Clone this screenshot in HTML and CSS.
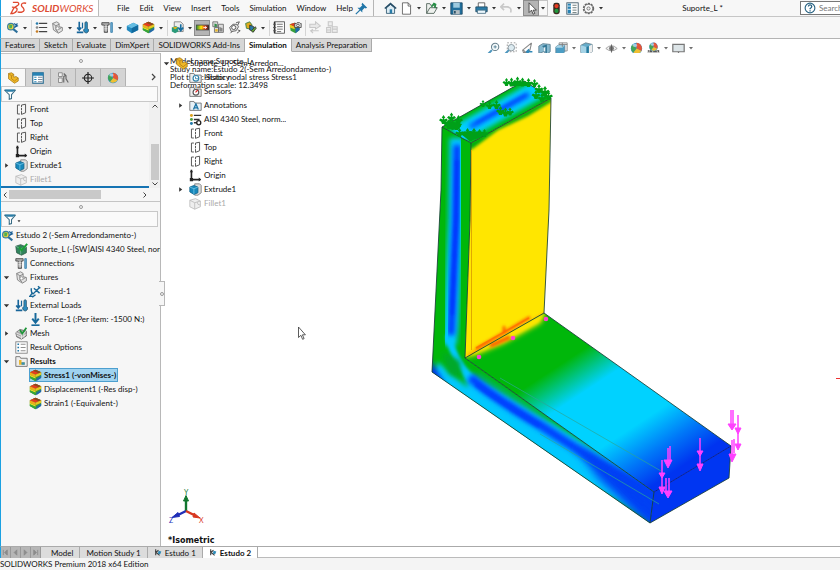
FILE: index.html
```html
<!DOCTYPE html>
<html lang="en">
<head>
<meta charset="utf-8">
<title>SOLIDWORKS - Suporte_L</title>
<link rel="stylesheet" href="styles.css">
</head>
<body>
<svg class="sprite" aria-hidden="true">
  <symbol id="down" viewBox="0 0 8 8"><path d="M2 3h4L4 5.500z" fill="#333"/></symbol>
  <symbol id="right" viewBox="0 0 8 8"><path d="M2.500 1.500v5L6 4z" fill="#333"/></symbol>
  <symbol id="open-arrow" viewBox="0 0 8 8"><path d="M1 2.500h6L4 6z" fill="#333"/></symbol>
  <symbol id="study" viewBox="0 0 16 16"><circle cx="6" cy="7" r="4" fill="#f4d13c" stroke="#3a7fa0" stroke-width="1.500"/><path d="M4 4l4 1-1 4-3 0z" fill="#4caf50"/><path d="M9 10l5 4" stroke="#2d6f9a" stroke-width="2.500"/><path d="M10 3l4 3-4 2M14 3l-3 5" stroke="#1a5f96" stroke-width="1.500" fill="none"/></symbol>
  <symbol id="list" viewBox="0 0 16 16"><path d="M5 3h10M5 8h10M5 13h10" stroke="#444" stroke-width="1.500"/><circle cx="2.500" cy="3" r="1.600" fill="#287cad"/><circle cx="2.500" cy="8" r="1.600" fill="#888"/><circle cx="2.500" cy="13" r="1.600" fill="#c57b23"/></symbol>
  <symbol id="fixture" viewBox="0 0 16 16"><path d="M2 3l5-2 3 2v4l4 1v4l-5 3-6-4z" fill="#e4e4e4" stroke="#777"/><path d="M2 3l4 3v5l3 3M6 6l4-2M10 10l3-2" stroke="#777" fill="none"/><circle cx="8" cy="9" r="2" fill="#fff" stroke="#888"/></symbol>
  <symbol id="loads" viewBox="0 0 16 16"><path d="M4 1v9M1.500 8L4 11l2.500-3M1 14h8" stroke="#17659a" stroke-width="2" fill="none"/><path d="M8 2v7" stroke="#17659a" stroke-width="1.500"/><path d="M11 2.500a1.500 1.500 0 0 1 3 0V9a3 3 0 1 1-3 0z" fill="#2b8cc0" stroke="#315c74"/></symbol>
  <symbol id="bolt" viewBox="0 0 16 16"><path d="M1 2h9v3H8v9H4V5H1z" fill="#aaa" stroke="#444"/><path d="M4 7h4M4 9h4M4 11h4" stroke="#eee"/><path d="M12 2h2v12h-2z" fill="#72b3d9" stroke="#367ca7"/></symbol>
  <symbol id="cube" viewBox="0 0 16 16"><path d="M1 6l8-4 6 3v6l-8 4-6-4z" fill="#2389bf"/><path d="M1 6l8-4 6 3-8 4z" fill="#65bde2"/><path d="M7 9l8-4v6l-8 4z" fill="#126b9f"/></symbol>
  <symbol id="result" viewBox="0 0 16 16"><path d="M1 4l7-3 7 3v6l-7 5-7-4z" fill="#3d9a35"/><path d="M1 4l7-3 7 3-7 3z" fill="#e43b20"/><path d="M5 2.300L8 1l7 3-3 1.300z" fill="#8a4a1c"/><path d="M1 4l7 3v3L1 7z" fill="#f5a81b"/><path d="M1 7l7 3v2L1 9z" fill="#e8e023"/><path d="M1 9l7 3v3l-7-4z" fill="#37a63a"/><path d="M8 7l7-3v3l-7 3z" fill="#e8c71f"/><path d="M9 12l6-4v3l-6 4z" fill="#2169a8"/></symbol>
  <symbol id="plot" viewBox="0 0 16 16"><path d="M4 1h8l3 3v9H4z" fill="#eee" stroke="#777"/><path d="M1 8l5-2 3 2v5l-4 2-4-2z" fill="#2b9a79"/><path d="M2 8l4-1 2 1-3 2z" fill="#e0b31e"/><path d="M12 4v7M9 8l3 4 3-4" stroke="#176d9f" stroke-width="2" fill="none"/></symbol>
  <linearGradient id="rainbow"><stop stop-color="#267f3b"/><stop offset=".4" stop-color="#ffe900"/><stop offset=".7" stop-color="#eb3a21"/><stop offset="1" stop-color="#222"/></linearGradient>
  <symbol id="band" viewBox="0 0 16 16"><path d="M0 5h16v6H0z" fill="url(#rainbow)" stroke="#444"/><path d="M9 8h4M11 6.500L13 8l-2 1.500" stroke="#fff" fill="none"/></symbol>
  <symbol id="compare" viewBox="0 0 16 16"><path d="M1 1h6v6H1zM8 4h6v10H8zM3 8h5v6H3z" fill="#ddd" stroke="#666"/><path d="M3 3l3 1v3H3z" fill="#35904b"/><path d="M9 7l4 2v4H9z" fill="#888"/><path d="M4 10h3v3H4z" fill="#e9b622"/></symbol>
  <symbol id="probe" viewBox="0 0 16 16"><path d="M2 8l4-4h5l2 3-3 5-6 1z" fill="#ddd" stroke="#555"/><circle cx="7" cy="8" r="2.500" fill="#fff" stroke="#444"/><path d="M10 2l4-1-2 4M5 13l-2 2M12 11l3 1-4 3" stroke="#444" fill="none"/></symbol>
  <symbol id="report" viewBox="0 0 16 16"><rect x="2" y="1" width="12" height="14" fill="#fff" stroke="#444"/><path d="M2 1v14" stroke="#333" stroke-width="2"/><path d="M5 4h7M5 7h7M5 10h7M5 13h5M0 4h4M0 8h4M0 12h4" stroke="#555"/></symbol>
  <symbol id="image" viewBox="0 0 16 16"><path d="M1 4l6-2 6 2v7l-5 4-6-3z" fill="#38a03a"/><path d="M1 4l6 3v3L1 8z" fill="#f0c722"/><path d="M1 4l6-2 4 2-4 3z" fill="#e43b20"/><path d="M8 9l5-2v4l-5 4z" fill="#2169a8"/><path d="M7 3h2l1-1h3l1 1h1v5H7z" fill="#ddd" stroke="#444"/><circle cx="11" cy="5.500" r="1.600" fill="#fff" stroke="#444"/></symbol>
  <symbol id="tools" viewBox="0 0 16 16"><path d="M2 3l5-2 3 4-2 5-5-1z" fill="#e0ab1d" stroke="#297b46"/><path d="M7 5l5 2v6l-5-2z" fill="#287da9" stroke="#333"/><path d="M9 12l5-5 1 2-4 5z" fill="#65a833" stroke="#333"/></symbol>
  <symbol id="ghost" viewBox="0 0 16 16"><path d="M1 4h7V1l6 5-6 4V8H1zM3 12h9M5 10l-3 2 3 3" stroke="#c8c8c8" fill="#e8e8e8" stroke-width="1.300"/></symbol>
  <symbol id="ghost2" viewBox="0 0 16 16"><path d="M4 1h5v5H4zM2 8h5v6H2zM9 7h6v7H9zM9 10h6M2 11h5" stroke="#c8c8c8" fill="#eee" stroke-width="1.300"/></symbol>
  <symbol id="home" viewBox="0 0 16 16"><path d="M3 7v7h10V7L8 3z" fill="#dcebf3" stroke="#28516a"/><path d="M1 8l7-6 7 6" fill="none" stroke="#244c66" stroke-width="2"/><path d="M7 9h3v5H7z" fill="#287ca8"/></symbol>
  <symbol id="page" viewBox="0 0 16 16"><path d="M3 1h7l3 3v11H3z" fill="#fff" stroke="#555"/><path d="M10 1v4h3" fill="none" stroke="#555"/></symbol>
  <symbol id="open" viewBox="0 0 16 16"><path d="M2 2h4l1 2h5v3h3l-4 7H2z" fill="#eef1ee" stroke="#44584d"/><path d="M2 14l4-7h9" fill="none" stroke="#44584d"/><path d="M8 6l3-4 2 1-1 4" stroke="#258f45" stroke-width="2" fill="none"/></symbol>
  <symbol id="save" viewBox="0 0 16 16"><path d="M1 1h14v14H1z" fill="#216f9d" stroke="#174461"/><path d="M4 1h8v6H4z" fill="#9dc9df"/><path d="M4 10h8v5H4z" fill="#b4bdc2"/><path d="M5 11h2v3H5z" fill="#234b62"/></symbol>
  <symbol id="print" viewBox="0 0 16 16"><path d="M4 1h8v6H4z" fill="#fff" stroke="#4c4c4c"/><path d="M1 6h14v6H1z" fill="#287aa6" stroke="#244c63"/><path d="M3 10h10v4H3z" fill="#eaf6fc" stroke="#466c82"/></symbol>
  <symbol id="undo" viewBox="0 0 16 16"><path d="M5 2L1 6l4 4M2 6h7q6 1 4 7" fill="none" stroke="#c9c9c9" stroke-width="2"/></symbol>
  <symbol id="pointer" viewBox="0 0 16 16"><path d="M5 1v12l3-3 2 5 2-1-2-4h4z" fill="#fff" stroke="#333"/></symbol>
  <symbol id="light" viewBox="0 0 16 16"><rect x="4" y="1" width="8" height="14" rx="3" fill="#3b2a20"/><circle cx="8" cy="5" r="2.600" fill="#e83b22"/><circle cx="8" cy="11" r="2.600" fill="#21983d"/></symbol>
  <symbol id="props" viewBox="0 0 16 16"><rect x="1" y="1" width="14" height="14" fill="#fff" stroke="#344e5d"/><path d="M2 2h4v12H2z" fill="#2682b4"/><path d="M8 4h5M8 7h5M8 10h5M8 13h5" stroke="#566"/><path d="M2 5h4M2 9h4" stroke="#fff"/></symbol>
  <symbol id="table" viewBox="0 0 16 16"><rect x="1" y="1" width="14" height="14" fill="#fff" stroke="#2a6d92" stroke-width="1.500"/><path d="M1 1h14v4H1z" fill="#2682b4"/><path d="M3 7h3M3 10h3M3 13h3" stroke="#2682b4" stroke-width="1.500"/><path d="M8 7h6M8 10h6M8 13h6" stroke="#789" stroke-width="1.300"/></symbol>
  <symbol id="gear" viewBox="0 0 16 16"><circle cx="8" cy="8" r="6" fill="none" stroke="#666" stroke-width="2" stroke-dasharray="2.700 1.100"/><circle cx="8" cy="8" r="5" fill="#fff" stroke="#666"/><circle cx="8" cy="8" r="2" fill="#eee" stroke="#666"/></symbol>
  <symbol id="pin" viewBox="0 0 16 16"><path d="M9 1l6 6-2 1-1-1-3 3v3L3 7h3l3-3-1-1z" fill="#2176a8"/><path d="M6 10l-5 5" stroke="#2176a8" stroke-width="1.500"/></symbol>
  <symbol id="help" viewBox="0 0 16 16"><circle cx="8" cy="8" r="6.500" fill="#fff" stroke="#286282" stroke-width="1.500"/><path d="M5.800 6q.2-2.200 2.300-2.200T10.400 6q0 1.200-2.200 2.600v1.200M8.100 11v1.700" stroke="#286282" stroke-width="1.700" fill="none"/></symbol>
  <symbol id="fit" viewBox="0 0 16 16"><circle cx="10" cy="6" r="4.500" fill="#f4fafc" stroke="#68818e" stroke-width="1.300"/><path d="M8 6h4M10 4v4" stroke="#4b788e"/><path d="M6 10l-5 5" stroke="#4d96bd" stroke-width="2.500"/></symbol>
  <symbol id="zoombox" viewBox="0 0 16 16"><rect x="4" y="1" width="11" height="11" fill="none" stroke="#888" stroke-dasharray="2 2"/><circle cx="9" cy="7" r="4" fill="#dceaf0" stroke="#7a8991"/><path d="M6 10l-5 5" stroke="#4d96bd" stroke-width="2.500"/></symbol>
  <symbol id="prev" viewBox="0 0 16 16"><path d="M13 1L2 10l1 3h5M13 1l-2 9-5 3-3-3" fill="#e9eef0" stroke="#888" stroke-width="1.300"/><path d="M14 12H8M10 9l-3 3 3 3" stroke="#3189b7" stroke-width="2" fill="none"/></symbol>
  <symbol id="section" viewBox="0 0 16 16"><path d="M1 5l5-3 9 1v9l-4 3-4-3-6 2z" fill="#87bad0" stroke="#577b8c"/><path d="M5 5l6-2v11l-4-3V7z" fill="#337795"/><path d="M7 7l2-1v6l-2-1z" fill="#e9f2f6"/></symbol>
  <symbol id="views" viewBox="0 0 16 16"><path d="M5 1h10v10H5z" fill="#eee" stroke="#888"/><path d="M1 6l3-2h8v8l-3 3H1z" fill="#4c9dc4" stroke="#5c879c"/><path d="M1 6l3-2h8L9 7H1z" fill="#a9d5e8"/><path d="M9 1v5M5 3h10" stroke="#777"/></symbol>
  <symbol id="style" viewBox="0 0 16 16"><path d="M1 4l6-3 8 2v9l-7 3-7-2z" fill="#65abc9" stroke="#687f8a"/><path d="M1 4l7 2v9l-7-2z" fill="#a5d3e6"/><path d="M8 6l3-1v9l-3 1z" fill="#247a9f"/><path d="M11 5l4-2v9l-4 2z" fill="#eee"/></symbol>
  <symbol id="eye" viewBox="0 0 16 16"><path d="M1 8q7-7 14 0-7 6-14 0z" fill="#eee" stroke="#999"/><circle cx="8" cy="8" r="3" fill="#777"/><path d="M8 3v10" stroke="#555"/></symbol>
  <symbol id="ball" viewBox="0 0 16 16"><circle cx="8" cy="8" r="7" fill="#4099cf"/><path d="M8 8V1a7 7 0 0 1 6 10z" fill="#e55639"/><path d="M8 8l6 3a7 7 0 0 1-10 2z" fill="#f0bf31"/><path d="M8 8l-4 5A7 7 0 0 1 3 3z" fill="#43a457"/><ellipse cx="6" cy="4" rx="3" ry="2" fill="#fff" opacity=".5"/></symbol>
  <symbol id="scene" viewBox="0 0 16 16"><path d="M1 10h14v5H1z" fill="#555"/><path d="M3 10l-1 5M7 10v5M12 10l2 5M1 13h14" stroke="#ddd"/><use href="#ball" x="2" width="12" height="12"/></symbol>
  <symbol id="monitor" viewBox="0 0 16 16"><path d="M1 3h14v9H1z" fill="#dde5e8" stroke="#777" stroke-width="1.500"/><path d="M8 12v3M4 15h8" stroke="#777" stroke-width="1.500"/></symbol>
  <symbol id="part" viewBox="0 0 16 16"><path d="M2 2l4-1 3 2v4l3-1 3 2v4l-5 3-8-6z" fill="#f0b827" stroke="#a77b1c"/><path d="M2 2l4 3v4l4 3M6 5l3-2M10 12l5-4" stroke="#b27e16" fill="none"/></symbol>
  <symbol id="config" viewBox="0 0 16 16"><path d="M2 1h5v5H2zM2 8h5v6H2z" fill="#eee" stroke="#777"/><path d="M9 2l3 3v4l3 5M9 14V6l3-2" stroke="#666" stroke-width="1.500" fill="none"/></symbol>
  <symbol id="target" viewBox="0 0 16 16"><circle cx="8" cy="8" r="5" fill="none" stroke="#222" stroke-width="1.400"/><path d="M8 0v16M0 8h16" stroke="#222" stroke-width="1.600"/></symbol>
  <symbol id="funnel" viewBox="0 0 16 16"><path d="M1 3h14L10 9v5l-3 1V9z" fill="#fff" stroke="#386c85" stroke-width="1.400"/><path d="M1 2h14l-3 3H4z" fill="#2b7ea8"/></symbol>
  <symbol id="plane" viewBox="0 0 16 16"><path d="M6 2.500H3v11h3M8 2.500l5-1v10.500l-5 2V10M8 2.500V5" fill="none" stroke="#555" stroke-width="1.200"/><path d="M8 6v3" stroke="#555" stroke-width="1.200"/></symbol>
  <symbol id="origin" viewBox="0 0 16 16"><path d="M3 1v12h11" fill="none" stroke="#222" stroke-width="2"/><path d="M1 4l2-3 2 3M12 10.500l3 2.500-3 2.500M1 11h4v4H1z" fill="#222"/></symbol>
  <symbol id="extrude" viewBox="0 0 16 16"><path d="M7 1h6l2 2v9l-4 3H7z" fill="#ddd" stroke="#777"/><path d="M1 5l5-2 5 2v7l-5 2-5-3z" fill="#1688bc" stroke="#17658b"/><path d="M1 5l5 2 5-2M6 7v7" stroke="#74c5e5" fill="none"/></symbol>
  <symbol id="fillet" viewBox="0 0 16 16"><path d="M1 4l7-2 6 3v7l-7 3-6-3z" fill="#eee" stroke="#bbb"/><path d="M1 4l6 3v8M7 7l7-2M10 6q0 4 4 4" fill="none" stroke="#bbb"/></symbol>
  <symbol id="folder-h" viewBox="0 0 16 16"><path d="M1 3h5l1 2h8v9H1z" fill="#eee" stroke="#666"/><circle cx="8.500" cy="9" r="3.500" fill="#fff" stroke="#2a7faa" stroke-width="1.400"/><path d="M8 7v2.500h3" stroke="#2a7faa" fill="none"/></symbol>
  <symbol id="folder-s" viewBox="0 0 16 16"><path d="M1 3h5l1 2h8v9H1z" fill="#eee" stroke="#666"/><circle cx="8.500" cy="9" r="3.500" fill="#fff" stroke="#555" stroke-width="1.400"/><path d="M8 9l3-3" stroke="#d22" stroke-width="1.500"/></symbol>
  <symbol id="folder-a" viewBox="0 0 16 16"><path d="M1 3h5l1 2h8v9H1z" fill="#e6f1f7" stroke="#666"/><path d="M5.500 13L8.500 6l3 7M6.500 11h4" stroke="#1a72a4" stroke-width="1.600" fill="none"/></symbol>
  <symbol id="material" viewBox="0 0 16 16"><path d="M6 3h9M6 8h7M6 12h4" stroke="#333" stroke-width="1.600"/><circle cx="3" cy="3" r="1.800" fill="#dda11b"/><circle cx="3" cy="8" r="1.800" fill="#4f9b40"/><circle cx="3" cy="13" r="1.800" fill="#2279a9"/><circle cx="12" cy="12" r="2.500" fill="#fff" stroke="#222" stroke-width="1.600"/></symbol>
  <symbol id="solid" viewBox="0 0 16 16"><path d="M1 4l6-2 7 3v7l-6 3-6-3z" fill="#31845d" stroke="#315c4a"/><path d="M1 4l6 3v7M7 7l7-2" stroke="#7dc09c" fill="none"/><path d="M5 5l3 4 7-8" fill="none" stroke="#18a134" stroke-width="2.400"/></symbol>
  <symbol id="fixed" viewBox="0 0 16 16"><path d="M3 4q-1 5 2 7l8-8M6 4l7 6M11 1.500l3 2.500M4 10l-3 4h4M8 12l-4 3" fill="none" stroke="#176797" stroke-width="1.700"/></symbol>
  <symbol id="force" viewBox="0 0 16 16"><path d="M8 0v10M4 7l4 5 4-5" fill="none" stroke="#17699b" stroke-width="2.400"/><path d="M3 15h10" stroke="#17699b" stroke-width="2"/></symbol>
  <symbol id="mesh" viewBox="0 0 16 16"><path d="M1 7l5-4 8 2v6l-6 4-6-3z" fill="#aaa" stroke="#666"/><path d="M1 7l7 3 6-5M8 10v5M4 5l7 2v6M2 10l6 3 6-4" stroke="#eee" fill="none"/><path d="M6 4l3 4 5-7" stroke="#20963a" stroke-width="2.200" fill="none"/></symbol>
  <symbol id="options" viewBox="0 0 16 16"><rect x="1" y="1" width="14" height="14" fill="#fff" stroke="#777"/><path d="M7 4h6M7 8h6M7 12h6" stroke="#777"/><path d="M3 4h2M3 8h2M3 12h2" stroke="#267baa" stroke-width="2"/></symbol>
  <symbol id="folder-r" viewBox="0 0 16 16"><path d="M1 2h5l1 2h8v10H1z" fill="#eee" stroke="#666"/><path d="M5 6v6h7V9H8V6z" fill="#eab52a"/><path d="M8 9h4v3H8z" fill="#3191bb"/></symbol>
  <symbol id="studytab" viewBox="0 0 16 16"><path d="M3 2v11M3 8l5-4M4 8l6 5" stroke="#444" stroke-width="2"/><path d="M8 5l5 1-2 5-4-1z" fill="#2b8bb8"/></symbol>
  <symbol id="tee" viewBox="0 0 12 12"><path d="M6 0L8.500 3.500 7 4v2l3-1.500L12 7 9 9 8 12H4L3 9 0 7l2-2.500L5 6V4L3.500 3.500z"/></symbol>
</svg>

<div class="app">
  <header class="titlebar">
    <div class="logo">
      <svg viewBox="0 0 20 14"><path d="M3 1h5q3 2-1 4L4 7M2 6q7 0 5 4-2 3-6 3l3-6M17 2q-5-1-5 2 0 1 2 3 2 3-1 4-2 1-5 0" fill="none" stroke="#e0492f" stroke-width="1.400"/></svg>
      <span class="brand"><b>SOLID</b>WORKS</span>
    </div>
    <nav class="menu"><button>File</button><button>Edit</button><button>View</button><button>Insert</button><button>Tools</button><button>Simulation</button><button>Window</button><button>Help</button></nav>
    <button class="ib pinbtn" aria-label="Pin menu"><svg><use href="#pin"/></svg></button>
    <div class="quick">
      <button class="ib" aria-label="Home"><svg><use href="#home"/></svg></button>
      <button class="ib" aria-label="New"><svg><use href="#page"/></svg></button><button class="dd" aria-label="New options"><svg><use href="#down"/></svg></button>
      <button class="ib" aria-label="Open"><svg><use href="#open"/></svg></button><button class="dd" aria-label="Open options"><svg><use href="#down"/></svg></button>
      <button class="ib" aria-label="Save"><svg><use href="#save"/></svg></button><button class="dd" aria-label="Save options"><svg><use href="#down"/></svg></button>
      <button class="ib" aria-label="Print"><svg><use href="#print"/></svg></button><button class="dd" aria-label="Print options"><svg><use href="#down"/></svg></button>
      <button class="ib" aria-label="Undo"><svg><use href="#undo"/></svg></button><button class="dd" aria-label="Undo options"><svg><use href="#down"/></svg></button>
      <button class="ib pressed" aria-label="Select"><svg><use href="#pointer"/></svg></button><button class="dd framed" aria-label="Select options"><svg><use href="#down"/></svg></button>
      <button class="ib" aria-label="Rebuild"><svg><use href="#light"/></svg></button>
      <button class="ib" aria-label="File properties"><svg><use href="#props"/></svg></button>
      <button class="ib" aria-label="Options"><svg><use href="#gear"/></svg></button><button class="dd" aria-label="Options menu"><svg><use href="#down"/></svg></button>
    </div>
    <div class="doc">Suporte_L *</div>
    <label class="search"><svg><use href="#help"/></svg><input type="text" placeholder="Search" aria-label="Search"></label>
  </header>

  <div class="toolbar">
    <button class="ib" aria-label="Study advisor"><svg><use href="#study"/></svg></button><button class="dd" aria-label="Study options"><svg><use href="#down"/></svg></button><i class="sep"></i>
    <button class="ib" aria-label="Apply material"><svg><use href="#list"/></svg></button>
    <button class="ib" aria-label="Fixtures"><svg><use href="#fixture"/></svg></button><button class="dd" aria-label="Fixture options"><svg><use href="#down"/></svg></button>
    <button class="ib" aria-label="External loads"><svg><use href="#loads"/></svg></button><button class="dd" aria-label="Load options"><svg><use href="#down"/></svg></button>
    <button class="ib" aria-label="Connections"><svg><use href="#bolt"/></svg></button><button class="dd" aria-label="Connection options"><svg><use href="#down"/></svg></button>
    <button class="ib" aria-label="Shell manager"><svg><use href="#cube"/></svg></button>
    <button class="ib" aria-label="Run study"><svg><use href="#result"/></svg></button><button class="dd" aria-label="Run options"><svg><use href="#down"/></svg></button><i class="sep"></i>
    <button class="ib" aria-label="Results advisor"><svg><use href="#plot"/></svg></button><button class="dd" aria-label="Results options"><svg><use href="#down"/></svg></button>
    <button class="ib pressed" aria-label="Deformed result"><svg><use href="#band"/></svg></button>
    <button class="ib" aria-label="Compare results"><svg><use href="#compare"/></svg></button>
    <button class="ib" aria-label="Design insight"><svg><use href="#probe"/></svg></button>
    <button class="ib" aria-label="Plot tools"><svg><use href="#tools"/></svg></button><button class="dd" aria-label="Plot tool options"><svg><use href="#down"/></svg></button><i class="sep"></i>
    <button class="ib" aria-label="Report"><svg><use href="#report"/></svg></button>
    <button class="ib" aria-label="Include image"><svg><use href="#image"/></svg></button><i class="sep"></i>
    <button class="ib" aria-label="Offloaded simulation"><svg><use href="#ghost"/></svg></button>
    <button class="ib" aria-label="Manage network"><svg><use href="#ghost2"/></svg></button>
  </div>

  <div class="ribbon">
    <nav class="tabs"><button>Features</button><button>Sketch</button><button>Evaluate</button><button>DimXpert</button><button>SOLIDWORKS Add-Ins</button><button class="on">Simulation</button><button>Analysis Preparation</button></nav>
    <div class="hud">
      <button class="ib" aria-label="Zoom to fit"><svg><use href="#fit"/></svg></button>
      <button class="ib" aria-label="Zoom to area"><svg><use href="#zoombox"/></svg></button>
      <button class="ib" aria-label="Previous view"><svg><use href="#prev"/></svg></button>
      <button class="ib" aria-label="Section view"><svg><use href="#section"/></svg></button>
      <button class="ib" aria-label="View orientation"><svg><use href="#views"/></svg></button><button class="dd" aria-label="Orientation options"><svg><use href="#down"/></svg></button>
      <button class="ib" aria-label="Display style"><svg><use href="#style"/></svg></button><button class="dd" aria-label="Style options"><svg><use href="#down"/></svg></button>
      <button class="ib" aria-label="Hide or show"><svg><use href="#eye"/></svg></button><button class="dd" aria-label="Visibility options"><svg><use href="#down"/></svg></button>
      <button class="ib" aria-label="Edit appearance"><svg><use href="#ball"/></svg></button>
      <button class="ib" aria-label="Apply scene"><svg><use href="#scene"/></svg></button><button class="dd" aria-label="Scene options"><svg><use href="#down"/></svg></button>
      <button class="ib" aria-label="View settings"><svg><use href="#monitor"/></svg></button><button class="dd" aria-label="View options"><svg><use href="#down"/></svg></button>
    </div>
  </div>

  <main class="work">
    <aside class="panel">
      <div class="grip"><i></i></div>
      <div class="ptabs">
        <button class="on" aria-label="Feature tree"><svg><use href="#part"/></svg></button>
        <button aria-label="Properties"><svg><use href="#table"/></svg></button>
        <button aria-label="Configurations"><svg><use href="#config"/></svg></button>
        <button aria-label="DimXpert manager"><svg><use href="#target"/></svg></button>
        <button aria-label="Display manager"><svg><use href="#ball"/></svg></button>
        <button class="more" aria-label="More tabs"><svg viewBox="0 0 8 12"><path d="M2 3l3 3-3 3" fill="none" stroke="#444" stroke-width="1.200"/></svg></button>
      </div>
      <div class="filter"><svg><use href="#funnel"/></svg></div>
      <div class="upper">
        <div class="col">
          <ul class="tree">
            <li class="l1"><i></i><svg><use href="#plane"/></svg>Front</li>
            <li class="l1"><i></i><svg><use href="#plane"/></svg>Top</li>
            <li class="l1"><i></i><svg><use href="#plane"/></svg>Right</li>
            <li class="l1"><i></i><svg><use href="#origin"/></svg>Origin</li>
            <li class="l1"><i><svg><use href="#right"/></svg></i><svg><use href="#extrude"/></svg>Extrude1</li>
            <li class="l1 off"><i></i><svg><use href="#fillet"/></svg>Fillet1</li>
          </ul>
        </div>
        <div class="vscroll"><svg viewBox="0 0 8 8"><path d="M1.500 5.500L4 3l2.500 2.500" /></svg><b></b><svg viewBox="0 0 8 8"><path d="M1.500 2.500L4 5l2.500-2.500" /></svg></div>
      </div>
      <div class="hscroll"><svg viewBox="0 0 8 8"><path d="M5.500 1.500L3 4l2.500 2.500" /></svg><b></b><svg viewBox="0 0 8 8"><path d="M2.500 1.500L5 4 2.500 6.500" /></svg></div>
      <div class="grip low"><i></i></div>
      <div class="filter"><svg><use href="#funnel"/></svg><svg class="tiny"><use href="#down"/></svg></div>
      <ul class="tree study">
        <li class="l0"><svg><use href="#study"/></svg>Estudo 2 (-Sem Arredondamento-)</li>
        <li class="l1"><i></i><svg><use href="#solid"/></svg>Suporte_L (-[SW]AISI 4340 Steel, norm.</li>
        <li class="l1"><i></i><svg><use href="#bolt"/></svg>Connections</li>
        <li class="l1"><i><svg><use href="#open-arrow"/></svg></i><svg><use href="#fixture"/></svg>Fixtures</li>
        <li class="l2"><i></i><svg><use href="#fixed"/></svg>Fixed-1</li>
        <li class="l1"><i><svg><use href="#open-arrow"/></svg></i><svg><use href="#loads"/></svg>External Loads</li>
        <li class="l2"><i></i><svg><use href="#force"/></svg>Force-1 (:Per item: -1500 N:)</li>
        <li class="l1"><i><svg><use href="#right"/></svg></i><svg><use href="#mesh"/></svg>Mesh</li>
        <li class="l1"><i></i><svg><use href="#options"/></svg>Result Options</li>
        <li class="l1 strong"><i><svg><use href="#open-arrow"/></svg></i><svg><use href="#folder-r"/></svg>Results</li>
        <li class="l2 strong"><i></i><span class="sel"><svg><use href="#result"/></svg>Stress1 (-vonMises-)</span></li>
        <li class="l2"><i></i><svg><use href="#result"/></svg>Displacement1 (-Res disp-)</li>
        <li class="l2"><i></i><svg><use href="#result"/></svg>Strain1 (-Equivalent-)</li>
      </ul>
      <button class="handle" aria-label="Collapse panel"><i></i></button>
    </aside>

    <section class="view">
      <svg class="model" viewBox="161 53 679 493" preserveAspectRatio="xMinYMin slice" role="img" aria-label="Stress plot of the bracket">
        <defs>
          <filter id="b1" x="-50%" y="-50%" width="200%" height="200%"><feGaussianBlur stdDeviation="1.500"/></filter>
          <filter id="b2" x="-50%" y="-50%" width="200%" height="200%"><feGaussianBlur stdDeviation="2.400"/></filter>
          <filter id="b3" x="-50%" y="-50%" width="200%" height="200%"><feGaussianBlur stdDeviation="4"/></filter>
          <linearGradient id="base" gradientUnits="userSpaceOnUse" x1="540" y1="330" x2="650" y2="497"><stop offset=".2" stop-color="#00b70a"/><stop offset=".38" stop-color="#00d2ff"/><stop offset=".66" stop-color="#00d2ff"/><stop offset=".82" stop-color="#0078f8"/><stop offset=".96" stop-color="#0034f0"/></linearGradient>
          <clipPath id="c-top"><path d="M442 127L524 81L551 98L471 143Z"/></clipPath>
          <clipPath id="c-side"><path d="M442 127L471 143L470 220L465 358L654 492L650 523L432 372L441 190Z"/></clipPath>
          <clipPath id="c-face"><path d="M471 143L551 98L549 210L544 313L465 358L470 220Z"/></clipPath>
          <clipPath id="c-base"><path d="M465 358L544 313L731 446L654 492Z"/></clipPath>
        </defs>
        <g clip-path="url(#c-top)">
          <path d="M430 70h130v80H430z" fill="#00b70a"/>
          <path d="M455 136L540 88" stroke="#00d0ff" stroke-width="19" filter="url(#b2)"/>
          <path d="M470 127L529 94" stroke="#0048ff" stroke-width="5" filter="url(#b2)"/>
          <path d="M476 123L526 95" stroke="#0048ff" stroke-width="2" filter="url(#b1)"/>
        </g>
        <g clip-path="url(#c-face)">
          <path d="M460 90h100v280H460z" fill="#ffe600"/>
          <path d="M468 143L553 96L551 102L528 116L498 130L471 150Z" fill="#00ad0a" filter="url(#b1)"/>
          <path d="M468 353L505 334L545 312V318L465 362Z" fill="#ffb400" filter="url(#b1)"/>
          <path d="M476 349L505 332L530 317M504 326v8" stroke="#ff5000" stroke-width="2.500" fill="none" filter="url(#b1)"/>
          <path d="M476 348L529 318" stroke="#ff6a00" stroke-width="1.500" opacity=".7"/>
          <path d="M543 290v14" stroke="#92c800" stroke-width="5" filter="url(#b1)"/>
        </g>
        <g clip-path="url(#c-base)">
          <path d="M460 305h280v195H460z" fill="url(#base)"/>
          <path d="M460 359L546 311L541 323L505 343L476 355Z" fill="#ffe600" filter="url(#b2)"/>
          <path d="M462 358L546 312L538 322L505 340L474 354Z" fill="#ffe600" filter="url(#b1)"/>
          <path d="M490 346l20-9" stroke="#ff5a00" stroke-width="4" filter="url(#b1)"/>
        </g>
        <g clip-path="url(#c-side)">
          <path d="M425 120h235v410H425z" fill="#00b70a"/>
          <path d="M457 138L456 220L451 325L449 345" stroke="#00c8ff" stroke-width="15" fill="none" filter="url(#b2)"/>
          <path d="M449 335Q451 355 470 378L520 415" stroke="#00c8ff" stroke-width="7" fill="none" filter="url(#b1)"/>
          <path d="M457 145L456 220L451 335" stroke="#0036ff" stroke-width="7" fill="none" filter="url(#b2)"/>
          <path d="M457 160L456 220L452 315" stroke="#0036ff" stroke-width="3" fill="none" filter="url(#b1)"/>
          <path d="M462 368L530 409L655 487L660 525L580 480L432 376L438 362L468 388Z" fill="#00c8ff" filter="url(#b2)"/>
          <path d="M478 374L530 407L552 419" stroke="#00b76a" stroke-width="3" filter="url(#b2)" fill="none"/>
          <path d="M442 352L460 361L461 378L449 374Z" fill="#00a82a" filter="url(#b2)"/>
          <path d="M470 377Q490 395 540 425L660 503" stroke="#0040ff" stroke-width="9" fill="none" filter="url(#b2)"/>
          <path d="M476 384Q494 398 540 426" stroke="#0040ff" stroke-width="4" fill="none" filter="url(#b1)"/>
          <path d="M575 446L665 490V530L650 527L598 478Z" fill="#0040f4" filter="url(#b3)"/>
          <path d="M610 470L665 498V530Z" fill="#0040f4" filter="url(#b3)"/>
          <path d="M428 358L438 372L446 386H428Z" fill="#0030e8" filter="url(#b2)"/>
        </g>
        <path d="M654 492L731 446L729 478L650 523Z" fill="#0036f2"/>
        <g fill="none" stroke="#163e36" stroke-width="1">
          <path d="M442 127L471 143L551 98M442 127L524 81L551 98M442 127L441 190L432 372L650 523L729 478L731 446L544 313L465 358L654 492L650 523M471 143L470 220L465 358M551 98L549 210L544 313" opacity=".85"/>
          <path d="M654 492L731 446" stroke="#0a2090"/>
          <path d="M540 434L659 504M500 378L661 471" stroke="#29a797" opacity=".7"/>
          <path d="M471.500 150V350" stroke="#e0a800"/>
        </g>
        <g fill="#00a018">
          <use href="#tee" x="439" y="115" width="9" height="9"/><use href="#tee" x="447" y="112" width="9" height="10"/><use href="#tee" x="454" y="115" width="9" height="9"/><use href="#tee" x="444" y="119" width="10" height="10"/><use href="#tee" x="452" y="121" width="9" height="9"/><use href="#tee" x="455" y="128" width="9" height="9"/><use href="#tee" x="463" y="128" width="9" height="9"/><use href="#tee" x="469" y="128" width="10" height="10"/><use href="#tee" x="475" y="129" width="9" height="9"/><use href="#tee" x="480" y="129" width="9" height="8"/><use href="#tee" x="466" y="133" width="9" height="8"/>
          <path d="M442 122l8-1 12 3-3 5-7 1zM458 132l12-1 15 1 3 2-9 4-9 3z"/>
          <use href="#tee" x="479" y="100" width="8" height="7"/><use href="#tee" x="485" y="101" width="9" height="8"/><use href="#tee" x="492" y="100" width="9" height="9"/><use href="#tee" x="496" y="106" width="9" height="9"/><use href="#tee" x="501" y="107" width="9" height="10"/><use href="#tee" x="506" y="107" width="8" height="9"/>
          <use href="#tee" x="502" y="78" width="9" height="8"/><use href="#tee" x="507" y="77" width="9" height="10"/><use href="#tee" x="513" y="76" width="9" height="10"/><use href="#tee" x="518" y="77" width="9" height="10"/><use href="#tee" x="524" y="78" width="9" height="9"/><use href="#tee" x="530" y="79" width="9" height="8"/><path d="M507 82h26l-5 4h-16z"/>
          <use href="#tee" x="534" y="84" width="10" height="9"/><use href="#tee" x="540" y="86" width="10" height="10"/><use href="#tee" x="544" y="91" width="9" height="9"/><use href="#tee" x="531" y="90" width="10" height="9"/><use href="#tee" x="537" y="93" width="10" height="9"/>
        </g>
        <g fill="#ff3fcf"><circle cx="479" cy="357" r="2.300"/><circle cx="513" cy="338" r="2.300"/><circle cx="546" cy="319" r="2.300"/></g>
        <g fill="#ff40ff" stroke="#ff40ff" stroke-width="1">
          <g stroke-width="1.500"><path d="M731 410v18M733 410v18M738 415v32M732 440v14M734 439v14M700 438v28M668 448v12M670 446v14M662 460v30M666 478v14M669 478v14"/></g>
          <path d="M728 424h8l-4 6zM735 428h6l-3 6zM735 444h6l-3 6zM729 454h7l-4 8zM697 451h6l-3 5zM697 464h6l-3 7zM664 460h8l-4 8zM659 473h6l-3 5zM659 487h6l-3 7zM664 491h8l-4 7z"/>
        </g>
        <g fill="none" stroke-width="1.600">
          <path d="M186 511v-10" stroke="#11772f" stroke-width="2.400"/><path d="M183.500 501L186 495.500l2.500 5.500z" fill="#11772f" stroke="#11772f" stroke-width="1"/>
          <path d="M186 511l-8 4" stroke="#202fb8" stroke-width="2.400"/><path d="M172 517.500l6-5 1.500 4z" fill="#202fb8" stroke="#202fb8" stroke-width="1"/>
          <path d="M186 511l8 4" stroke="#d8371f" stroke-width="2.400"/><path d="M200 518l-6-5-1 4z" fill="#d8371f" stroke="#d8371f" stroke-width="1"/>
        </g>
        <g class="axes"><text x="184" y="495" fill="#11772f">Y</text><text x="169" y="523" fill="#202fb8">Z</text><text x="199" y="523" fill="#d8371f">X</text></g>
        <path d="M298.500 327v10.500l2.400-2.200 1.700 4 1.500-.7-1.700-3.800h3z" fill="#fff" stroke="#333" stroke-width=".8"/>
        <path d="M836 378.500h4" stroke="#e33"/>
      </svg>
      <div class="info"><div>Model name:Suporte_L</div><div>Study name:Estudo 2(-Sem Arredondamento-)</div><div>Plot type: Static nodal stress Stress1</div><div>Deformation scale: 12.3498</div></div>
      <ul class="tree flyout">
        <li class="l1"><i><svg><use href="#open-arrow"/></svg></i><svg><use href="#part"/></svg>Suporte_L (-Sem Arredon...</li>
        <li class="l2"><i></i><svg><use href="#folder-h"/></svg>History</li>
        <li class="l2"><i></i><svg><use href="#folder-s"/></svg>Sensors</li>
        <li class="l2"><i><svg><use href="#right"/></svg></i><svg><use href="#folder-a"/></svg>Annotations</li>
        <li class="l2"><i></i><svg><use href="#material"/></svg>AISI 4340 Steel, norm...</li>
        <li class="l2"><i></i><svg><use href="#plane"/></svg>Front</li>
        <li class="l2"><i></i><svg><use href="#plane"/></svg>Top</li>
        <li class="l2"><i></i><svg><use href="#plane"/></svg>Right</li>
        <li class="l2"><i></i><svg><use href="#origin"/></svg>Origin</li>
        <li class="l2"><i><svg><use href="#right"/></svg></i><svg><use href="#extrude"/></svg>Extrude1</li>
        <li class="l2 off"><i></i><svg><use href="#fillet"/></svg>Fillet1</li>
      </ul>
      <div class="orient">*Isometric</div>
    </section>
  </main>

  <nav class="sheets">
    <button class="nav" aria-label="First tab"><svg viewBox="0 0 8 8"><path d="M1.500 1v6M6 1v6L3 4z"/></svg></button><button class="nav" aria-label="Previous tab"><svg viewBox="0 0 8 8"><path d="M5.500 1v6l-3-3z"/></svg></button><button class="nav" aria-label="Next tab"><svg viewBox="0 0 8 8"><path d="M2.500 1v6l3-3z"/></svg></button><button class="nav" aria-label="Last tab"><svg viewBox="0 0 8 8"><path d="M2 1v6l3-3zM6.500 1v6"/></svg></button>
    <button class="sheet first">Model</button><button class="sheet">Motion Study 1</button><button class="sheet"><svg><use href="#studytab"/></svg>Estudo 1</button><button class="sheet on"><svg><use href="#studytab"/></svg>Estudo 2</button><span class="rest"></span>
  </nav>
  <footer class="status">SOLIDWORKS Premium 2018 x64 Edition</footer>
</div>
</body>
</html>
```
FILE: styles.css
```css
* { box-sizing: border-box; }
body { margin: 0; font: 8px/14px Lato, "Open Sans", sans-serif; color: #111; background: #fff; }
button { margin: 0; padding: 0; border: 0; background: none; font: inherit; color: inherit; }
ul { list-style: none; margin: 0; padding: 0; }
.sprite { position: absolute; width: 0; height: 0; }
.app { display: flex; flex-direction: column; height: 100vh; overflow: hidden; }

.ib { flex: none; width: 16px; height: 16px; display: grid; place-items: center; }
.ib svg { width: 13px; height: 13px; }
.dd { flex: none; width: 9px; height: 16px; display: grid; place-items: center; }
.dd svg { width: 8px; height: 8px; }
.pressed { background: #b4b4b4; border: 1px solid #8c8c8c; }
.framed { border: 1px solid #c4c4c4; border-left: 0; }

.titlebar { flex: none; height: 17px; display: flex; align-items: center; background: #f7f7f7; border-left: 1px solid #1ba1e2; border-bottom: 1px solid #c6c6c6; }
.logo { width: 98px; height: 16px; display: flex; align-items: center; gap: 3px; padding-left: 9px; background: #fff; border-right: 1px solid #bbb; color: #dd4a32; }
.logo > svg { width: 19px; height: 14px; }
.brand { font-size: 10px; font-style: italic; }
.menu { display: flex; gap: 10px; width: 254px; padding-left: 18px; }
.pinbtn { margin-right: 4px; }
.quick { display: flex; align-items: center; padding-left: 8px; border-left: 1px solid #b5b5b5; }
.doc { flex: 1; text-align: center; }
.search { display: flex; align-items: center; gap: 3px; width: 40px; height: 14px; padding-left: 3px; overflow: hidden; border: 1px solid #777; border-right: 0; background: #fff; }
.search svg { flex: none; width: 12px; height: 12px; }
.search input { width: 60px; min-width: 60px; padding: 0; border: 0; outline: 0; font: inherit; background: none; }
.search input::placeholder { color: #777; opacity: 1; }

.toolbar { flex: none; height: 22px; display: flex; align-items: center; padding-left: 3px; background: #f7f7f7; border-left: 1px solid #1ba1e2; border-bottom: 1px solid #b4b4b4; }
.sep { flex: none; width: 1px; height: 16px; margin: 0 1px 0 2px; background: #d5d5d5; }

.ribbon { flex: none; height: 14px; display: flex; align-items: flex-start; border-left: 1px solid #1ba1e2; }
.tabs { display: flex; height: 14px; width: 484px; }
.tabs button { height: 13px; padding: 0 4px; line-height: 12px; background: #d6d6d6; border-right: 1px solid #aaa; border-bottom: 1px solid #aaa; white-space: nowrap; }
.tabs .on { background: #fff; border-bottom-color: #fff; font-weight: 700; }
.hud { display: flex; padding-top: 1px; }
.hud .ib { width: 17px; }
.hud .dd { width: 8px; opacity: .7; }

.work { flex: 1; min-height: 0; display: flex; }
.panel { position: relative; flex: none; width: 161px; display: flex; flex-direction: column; background: #f6f6f6; border-left: 1px solid #1ba1e2; border-right: 1px solid #b8b8b8; }
.grip { flex: none; height: 15px; display: grid; place-items: center; border-top: 1px solid #c4c4c4; }
.grip i, .handle i { width: 4px; height: 4px; border: 1px solid #999; border-radius: 50%; }
.ptabs { flex: none; display: flex; height: 18px; }
.ptabs button { width: 25px; display: grid; place-items: center; background: #d4d4d4; border-right: 1px solid #b2b2b2; border-top: 1px solid #c0c0c0; }
.ptabs .on { background: #f8f8f8; }
.ptabs .more { width: 12px; margin: 0 0 0 auto; background: none; border: 0; }
.ptabs svg { width: 12px; height: 12px; }
.filter { flex: none; height: 16px; margin-right: 2px; display: flex; align-items: center; padding-left: 2px; background: #fafafa; border: 1px solid #c8c8c8; }
.filter svg { width: 12px; height: 12px; }
.filter .tiny { width: 6px; height: 8px; margin-top: 4px; }
.upper { flex: none; display: flex; }
.col { flex: 1; border-bottom: 2px solid #1674b3; }
.tree li { display: flex; align-items: center; height: 14px; white-space: nowrap; overflow: hidden; }
.tree svg { flex: none; width: 13px; height: 13px; margin-right: 2px; }
.tree i { flex: none; width: 14px; height: 14px; display: grid; place-items: center; }
.tree i svg { width: 7px; height: 7px; margin: 0 4px 0 0; }
.tree .l2 { padding-left: 14px; }
.off { color: #aaa; }
.strong { font-weight: 700; }
.vscroll { width: 11px; display: flex; flex-direction: column; align-items: center; background: #f0f0f0; }
.vscroll b { width: 8px; height: 36px; margin-top: auto; background: #c9c9c9; }
.vscroll svg, .hscroll svg { flex: none; width: 8px; height: 8px; fill: none; stroke: #444; stroke-width: 1px; }
.hscroll { flex: none; height: 13px; margin-right: 11px; display: flex; align-items: center; }
.hscroll b { width: 92px; height: 9px; margin-right: auto; background: #c9c9c9; }
.low { height: 10px; border-top: 1px solid #c4c4c4; }
.study { padding-top: 1px; }
.sel { display: flex; align-items: center; height: 14px; padding-right: 2px; background: #9fd2ef; outline: 1px solid #4c9fcf; outline-offset: -1px; }
.handle { position: absolute; right: -5px; top: 228px; width: 6px; height: 25px; display: grid; place-items: center; background: #f6f6f6; border: 1px solid #b8b8b8; border-left: 0; z-index: 1; }

.view { position: relative; flex: 1; min-width: 0; background: #fff; overflow: hidden; }
.model { display: block; width: 100%; height: 100%; }
.axes { font: 7px Lato, sans-serif; }
.info { position: absolute; left: 9px; top: 4px; line-height: 8px; }
.flyout { position: absolute; left: 0; top: 3px; }
.orient { position: absolute; left: 7px; bottom: 0; font: 700 8px/10px "DejaVu Sans", Lato, sans-serif; }

.sheets { flex: none; height: 12px; display: flex; background: #fff; border-left: 1px solid #1ba1e2; border-top: 1px solid #aaa; }
.sheets button { border-right: 1px solid #aaa; background: #dcdcdc; line-height: 10px; }
.sheets .nav { width: 10px; display: grid; place-items: center; background: #b6b6b6; border-color: #999; }
.nav svg { width: 7px; height: 7px; fill: #8c8c8c; stroke: #8c8c8c; }
.sheet { display: flex; align-items: center; gap: 2px; padding: 0 6px; white-space: nowrap; }
.sheets .first { padding-left: 10px; }
.sheet svg { width: 9px; height: 9px; }
.sheets .on { background: #fff; font-weight: 700; }
.rest { flex: 1; border-bottom: 1px solid #bbb; }
.status { flex: none; height: 12px; line-height: 12px; background: #f4f4f4; }
```
